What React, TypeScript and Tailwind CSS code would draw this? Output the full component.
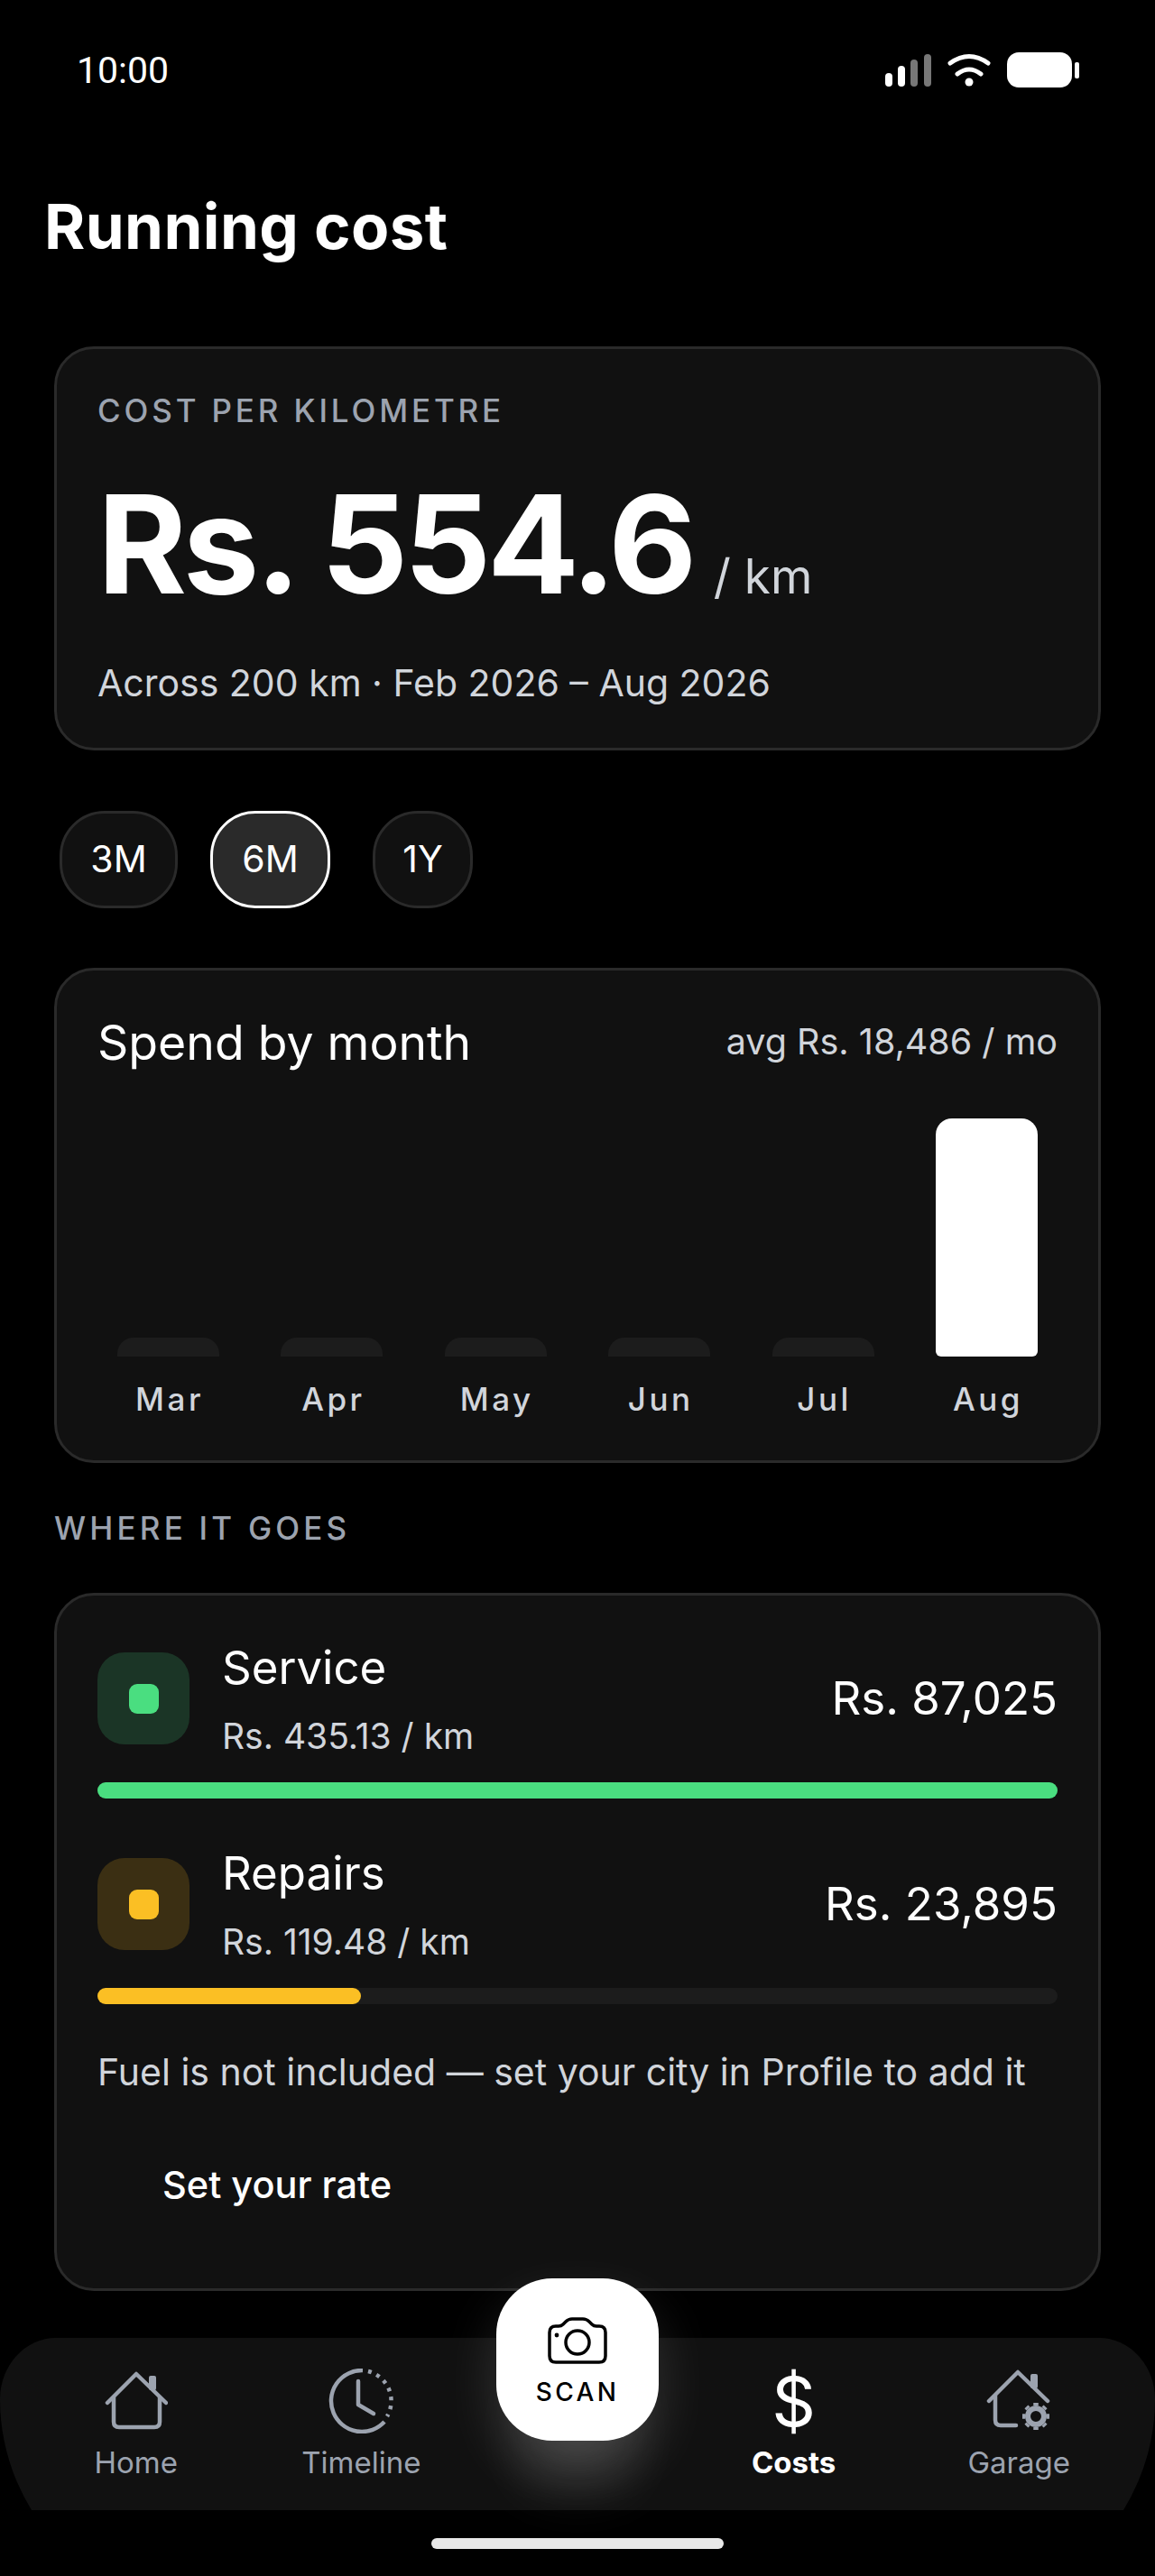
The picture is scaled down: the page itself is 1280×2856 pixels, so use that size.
import type { ReactNode } from "react";

const months = [
  { label: "Mar", h: "h-[21px]", on: false },
  { label: "Apr", h: "h-[21px]", on: false },
  { label: "May", h: "h-[21px]", on: false },
  { label: "Jun", h: "h-[21px]", on: false },
  { label: "Jul", h: "h-[21px]", on: false },
  { label: "Aug", h: "h-[264px]", on: true },
];

const gearTeeth = [0, 45, 90, 135, 180, 225, 270, 315];

function StatusBar() {
  return (
    <div className="flex h-[40px] items-center justify-between pl-[85px] pr-[84px]">
      <span className="font-['Roboto',sans-serif] text-[41px] leading-[48px] text-white">10:00</span>
      <svg width="215" height="40" viewBox="0 0 215 40">
        <rect x="0" y="23" width="8" height="15" rx="4" fill="#fff" />
        <rect x="14" y="15" width="8" height="23" rx="4" fill="#fff" />
        <rect x="28" y="8" width="8" height="30" rx="4" fill="#777" />
        <rect x="43" y="2" width="8" height="36" rx="4" fill="#777" />
        <path d="M72 12Q93-3 114 12M80 24Q93 14 106 24" fill="none" stroke="#fff" strokeWidth="5" strokeLinecap="round" />
        <circle cx="93" cy="33" r="4.5" fill="#fff" />
        <rect x="135" y="0" width="72" height="39" rx="13" fill="#fff" />
        <rect x="210" y="11" width="5" height="18" rx="2" fill="#fff" />
      </svg>
    </div>
  );
}

function Pill({ label, active, width }: { label: string; active?: boolean; width: string }) {
  return (
    <div
      className={
        active
          ? `flex h-[108px] items-center justify-center rounded-[50px] border-[3px] border-white bg-[#2a2a2a] text-[41px] text-white ${width}`
          : `flex h-[108px] items-center justify-center rounded-[50px] border-[3px] border-[#2a2a2a] bg-[#111] text-[41px] text-white ${width}`
      }
    >
      {label}
    </div>
  );
}

function CostRow(props: {
  name: string;
  rate: string;
  total: string;
  tint: string;
  dot: string;
  fill: string;
  width: string;
}) {
  return (
    <div>
      <div className="flex items-center">
        <div className={`flex h-[102px] w-[102px] items-center justify-center rounded-[30px] ${props.tint}`}>
          <div className={`h-[33px] w-[33px] rounded-[9px] ${props.dot}`} />
        </div>
        <div className="ml-[36px] flex-1">
          <div className="text-[51px] leading-[62px] text-white">{props.name}</div>
          <div className="mt-[22px] text-[39px] leading-[46px] text-[#d1d5db]">{props.rate}</div>
        </div>
        <div className="text-[51px] text-white">{props.total}</div>
      </div>
      <div className="mt-[28px] h-[18px] rounded-full bg-[#1c1c1c]">
        <div className={`h-full rounded-full ${props.fill} ${props.width}`} />
      </div>
    </div>
  );
}

function NavItem({ label, active, children }: { label: string; active?: boolean; children: ReactNode }) {
  return (
    <div className="flex w-[200px] flex-col items-center">
      <div className="flex h-[80px] items-center justify-center">{children}</div>
      <div className={active ? "mt-[8px] text-[33px] leading-[40px] font-bold text-white" : "mt-[8px] text-[33px] leading-[40px] text-[#9ca3af]"}>
        {label}
      </div>
    </div>
  );
}

function HouseIcon() {
  return (
    <svg width="70" height="66" viewBox="0 0 70 66" fill="none" stroke="#9ca3af" strokeWidth="4.5" strokeLinecap="round" strokeLinejoin="round">
      <path d="M3 35 35 3l33 32" />
      <rect x="49" y="5" width="8" height="16" rx="2" fill="#9ca3af" stroke="none" />
      <path d="M10 29v27q0 6 6 6h39q6 0 6-6V29" />
    </svg>
  );
}

function GarageIcon() {
  return (
    <svg width="72" height="70" viewBox="0 0 72 70" fill="none" stroke="#9ca3af" strokeWidth="4.5" strokeLinecap="round" strokeLinejoin="round">
      <path d="M3 35 35 3l33 32" />
      <rect x="49" y="5" width="8" height="16" rx="2" fill="#9ca3af" stroke="none" />
      <path d="M10 29v27q0 6 6 6h17" />
      {/* settings gear on the corner of the house */}
      <circle cx="55" cy="52" r="9" strokeWidth="6" />
      {gearTeeth.map((deg) => (
        <path key={deg} d="M55 40v-3" strokeWidth="5.5" strokeLinecap="butt" transform={`rotate(${deg} 55 52)`} />
      ))}
    </svg>
  );
}

function TimelineIcon() {
  return (
    <svg width="72" height="72" viewBox="0 0 72 72" fill="none" stroke="#9ca3af" strokeWidth="4.5" strokeLinecap="round" strokeLinejoin="round">
      <path d="M38 2A34 34 0 1 0 62 59" strokeLinecap="butt" />
      <path d="M44 3A34 34 0 0 1 65 53" strokeDasharray="4 6" strokeLinecap="butt" />
      <path d="M33 14v26l17 10" />
    </svg>
  );
}

function CameraIcon() {
  return (
    <svg width="72" height="56" viewBox="0 0 72 56" fill="none" stroke="#000" strokeWidth="3.5" strokeLinejoin="round">
      <path d="M12 12h3q3 0 5-2l3-3q3-3 7-3h12q4 0 7 3l3 3q2 2 5 2h3q7 0 7 7v26q0 7-7 7H12q-7 0-7-7V19q0-7 7-7Z" />
      <circle cx="36" cy="30" r="13" />
      <circle cx="13" cy="22" r="2.4" fill="#000" stroke="none" />
    </svg>
  );
}

export default function App() {
  return (
    <div className="relative h-[2856px] w-[1280px] overflow-hidden bg-black pt-[58px] font-['Inter',sans-serif]">
      <StatusBar />
      <h1 className="mt-[111px] ml-[49px] text-[69px] leading-[84px] font-bold tracking-[0.4px] text-white">Running cost</h1>

      <section className="mx-[60px] mt-[91px] h-[448px] rounded-[44px] border-[3px] border-[#2a2a2a] bg-[#111] px-[45px] pt-[46px]">
        <div className="text-[35px] leading-[44px] font-medium tracking-[0.11em] text-[#9ca3af]">COST PER KILOMETRE</div>
        <div className="mt-[42px] flex items-baseline">
          <span className="text-[151px] leading-[168px] font-bold tracking-[-4.4px] text-white">Rs. 554.6</span>
          <span className="ml-[23px] text-[53px] text-[#d1d5db]">/ km</span>
        </div>
        <div className="mt-[45px] text-[41px] leading-[50px] text-[#d1d5db]">Across 200 km · Feb 2026 – Aug 2026</div>
      </section>

      <div className="mt-[67px] ml-[66px] flex gap-[36px]">
        <Pill label="3M" width="w-[131px]" />
        <Pill label="6M" width="w-[133px]" active />
        <div className="ml-[11px]">
          <Pill label="1Y" width="w-[111px]" />
        </div>
      </div>

      <section className="mx-[60px] mt-[66px] h-[549px] rounded-[44px] border-[3px] border-[#2a2a2a] bg-[#111] px-[45px] pt-[48px]">
        <div className="flex items-center justify-between">
          <span className="text-[53.5px] leading-[64px] text-white">Spend by month</span>
          <span className="text-[39.5px] text-[#d1d5db]">avg Rs. 18,486 / mo</span>
        </div>
        <div className="mt-[52px] flex h-[264px] items-end justify-between px-[22px]">
          {months.map((m) => (
            <div
              key={m.label}
              className={
                m.on
                  ? `w-[113px] rounded-t-[18px] rounded-b-[6px] bg-white ${m.h}`
                  : `w-[113px] rounded-t-[18px] bg-[#1c1c1c] ${m.h}`
              }
            />
          ))}
        </div>
        <div className="mt-[25px] flex justify-between px-[22px]">
          {months.map((m) => (
            <span key={m.label} className="w-[113px] pl-[3px] text-center text-[35px] leading-[44px] font-medium tracking-[0.1em] text-[#d1d5db]">
              {m.label}
            </span>
          ))}
        </div>
      </section>

      <div className="mt-[50px] ml-[60px] text-[35px] leading-[44px] font-medium tracking-[0.12em] text-[#9ca3af]">WHERE IT GOES</div>

      <section className="mx-[60px] mt-[50px] h-[774px] rounded-[44px] border-[3px] border-[#2a2a2a] bg-[#111] px-[45px] pt-[49px]">
        <div className="flex flex-col gap-[52px]">
          <CostRow name="Service" rate="Rs. 435.13 / km" total="Rs. 87,025" tint="bg-[#1b3526]" dot="bg-[#4ade80]" fill="bg-[#4ade80]" width="w-full" />
          <CostRow name="Repairs" rate="Rs. 119.48 / km" total="Rs. 23,895" tint="bg-[#3b2f13]" dot="bg-[#fbbf24]" fill="bg-[#fbbf24]" width="w-[27.4%]" />
        </div>
        <p className="mt-[49px] text-[41px] leading-[52px] text-[#d1d5db]">Fuel is not included — set your city in Profile to add it</p>
        <p className="mt-[74px] ml-[72px] text-[41.5px] leading-[50px] font-medium text-white">Set your rate</p>
      </section>

      {/* tab bar: the panel runs past the clip so its lower corners are cut off mid-curve */}
      <nav className="absolute top-[2592px] left-0 h-[191px] w-[1280px] overflow-hidden">
        <div className="flex h-[308px] gap-[50px] rounded-[62px_62px_248px_248px/68px_68px_240px_240px] bg-[#111] px-[51px] pt-[30px]">
          <NavItem label="Home"><HouseIcon /></NavItem>
          <NavItem label="Timeline"><TimelineIcon /></NavItem>
          <div className="w-[180px]" />
          <NavItem label="Costs" active><span className="text-[76px] leading-[80px] text-white">$</span></NavItem>
          <NavItem label="Garage"><GarageIcon /></NavItem>
        </div>
      </nav>

      <div className="absolute top-[2526px] left-[550px] flex h-[180px] w-[180px] flex-col items-center rounded-[62px] bg-white pt-[41px] shadow-[0_26px_60px_rgba(255,255,255,0.14),0_80px_60px_-30px_rgba(255,255,255,0.12)]">
        <CameraIcon />
        <span className="mt-[11px] text-[28px] leading-[36px] font-medium tracking-[0.12em] text-black">SCAN</span>
      </div>

      <div className="absolute top-[2814px] left-[478px] h-[12px] w-[324px] rounded-full bg-[#e8e8e8]" />
    </div>
  );
}
